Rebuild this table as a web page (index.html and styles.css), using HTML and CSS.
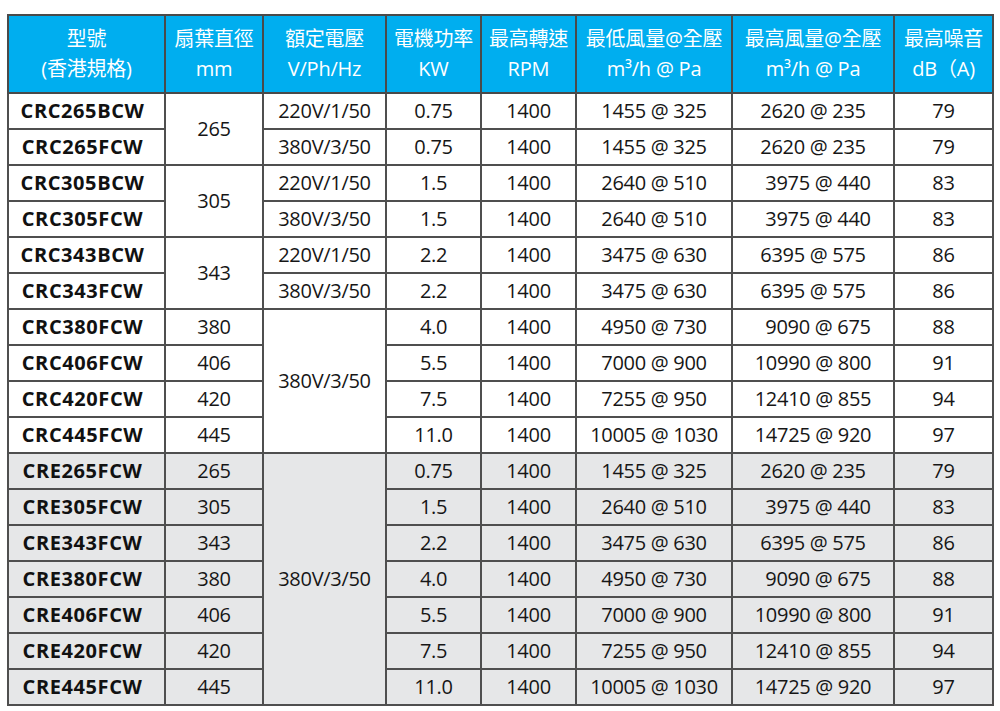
FILE: index.html
```html
<!DOCTYPE html>
<html lang="zh-Hant">
<head>
<meta charset="utf-8">
<link rel="stylesheet" href="styles.css">
</head>
<body>
<div class="page">
<table class="spec">
<colgroup>
<col class="c1"><col class="c2"><col class="c3"><col class="c4"><col class="c5"><col class="c6"><col class="c7"><col class="c8">
</colgroup>
<thead>
<tr>
<th>型號<br>(香港規格)</th>
<th>扇葉直徑<br>mm</th>
<th>額定電壓<br>V/Ph/Hz</th>
<th>電機功率<br>KW</th>
<th>最高轉速<br>RPM</th>
<th>最低風量@全壓<br>m³/h @ Pa</th>
<th>最高風量@全壓<br>m³/h @ Pa</th>
<th>最高噪音<br>dB（A)</th>
</tr>
</thead>
<tbody>
<tr><td class="model">CRC265BCW</td><td rowspan="2">265</td><td>220V/1/50</td><td>0.75</td><td>1400</td><td>1455 @ 325</td><td>2620 @ 235</td><td>79</td></tr>
<tr><td class="model">CRC265FCW</td><td>380V/3/50</td><td>0.75</td><td>1400</td><td>1455 @ 325</td><td>2620 @ 235</td><td>79</td></tr>
<tr><td class="model">CRC305BCW</td><td rowspan="2">305</td><td>220V/1/50</td><td>1.5</td><td>1400</td><td>2640 @ 510</td><td class="sh">3975 @ 440</td><td>83</td></tr>
<tr><td class="model">CRC305FCW</td><td>380V/3/50</td><td>1.5</td><td>1400</td><td>2640 @ 510</td><td class="sh">3975 @ 440</td><td>83</td></tr>
<tr><td class="model">CRC343BCW</td><td rowspan="2">343</td><td>220V/1/50</td><td>2.2</td><td>1400</td><td>3475 @ 630</td><td>6395 @ 575</td><td>86</td></tr>
<tr><td class="model">CRC343FCW</td><td>380V/3/50</td><td>2.2</td><td>1400</td><td>3475 @ 630</td><td>6395 @ 575</td><td>86</td></tr>
<tr><td class="model">CRC380FCW</td><td>380</td><td rowspan="4">380V/3/50</td><td>4.0</td><td>1400</td><td>4950 @ 730</td><td class="sh">9090 @ 675</td><td>88</td></tr>
<tr><td class="model">CRC406FCW</td><td>406</td><td>5.5</td><td>1400</td><td>7000 @ 900</td><td>10990 @ 800</td><td>91</td></tr>
<tr><td class="model">CRC420FCW</td><td>420</td><td>7.5</td><td>1400</td><td>7255 @ 950</td><td>12410 @ 855</td><td>94</td></tr>
<tr><td class="model">CRC445FCW</td><td>445</td><td>11.0</td><td>1400</td><td>10005 @ 1030</td><td>14725 @ 920</td><td>97</td></tr>
<tr class="alt"><td class="model">CRE265FCW</td><td>265</td><td rowspan="7">380V/3/50</td><td>0.75</td><td>1400</td><td>1455 @ 325</td><td>2620 @ 235</td><td>79</td></tr>
<tr class="alt"><td class="model">CRE305FCW</td><td>305</td><td>1.5</td><td>1400</td><td>2640 @ 510</td><td class="sh">3975 @ 440</td><td>83</td></tr>
<tr class="alt"><td class="model">CRE343FCW</td><td>343</td><td>2.2</td><td>1400</td><td>3475 @ 630</td><td>6395 @ 575</td><td>86</td></tr>
<tr class="alt"><td class="model">CRE380FCW</td><td>380</td><td>4.0</td><td>1400</td><td>4950 @ 730</td><td class="sh">9090 @ 675</td><td>88</td></tr>
<tr class="alt"><td class="model">CRE406FCW</td><td>406</td><td>5.5</td><td>1400</td><td>7000 @ 900</td><td>10990 @ 800</td><td>91</td></tr>
<tr class="alt"><td class="model">CRE420FCW</td><td>420</td><td>7.5</td><td>1400</td><td>7255 @ 950</td><td>12410 @ 855</td><td>94</td></tr>
<tr class="alt"><td class="model">CRE445FCW</td><td>445</td><td>11.0</td><td>1400</td><td>10005 @ 1030</td><td>14725 @ 920</td><td>97</td></tr>
</tbody>
</table>
</div>
</body>
</html>
```

FILE: styles.css
```css
html, body {
  margin: 0;
  padding: 0;
  background: #ffffff;
}
.page {
  padding: 14px 8px 0 7px;
}
.spec {
  width: 985px;
  table-layout: fixed;
  border-collapse: collapse;
  font-family: "Open Sans", "Noto Sans CJK TC", sans-serif;
  font-size: 20px;
  color: #161616;
  border: 2px solid #4a4a4a;
}
.c1 { width: 157px; }
.c2 { width: 98px; }
.c3 { width: 123px; }
.c4 { width: 95px; }
.c5 { width: 95px; }
.c6 { width: 156px; }
.c7 { width: 162px; }
.c8 { width: 99px; }
.spec th {
  background: #00aeef;
  color: #ffffff;
  font-weight: normal;
  height: 76px;
  line-height: 30px;
  padding: 0;
  border: 2px solid #4a4a4a;
  text-align: center;
  letter-spacing: -0.2px;
}
.spec td {
  height: 34px;
  padding: 0;
  text-align: center;
  border: 2px solid #4f4f4f;
  line-height: 34px;
  white-space: nowrap;
  letter-spacing: -0.3px;
}
.spec td.model {
  font-weight: bold;
  color: #111111;
  letter-spacing: 0.6px;
  padding-right: 8px;
}
.spec td.sh {
  padding-left: 10px;
}
.spec tr.alt td {
  background: #e6e7e8;
}
```
